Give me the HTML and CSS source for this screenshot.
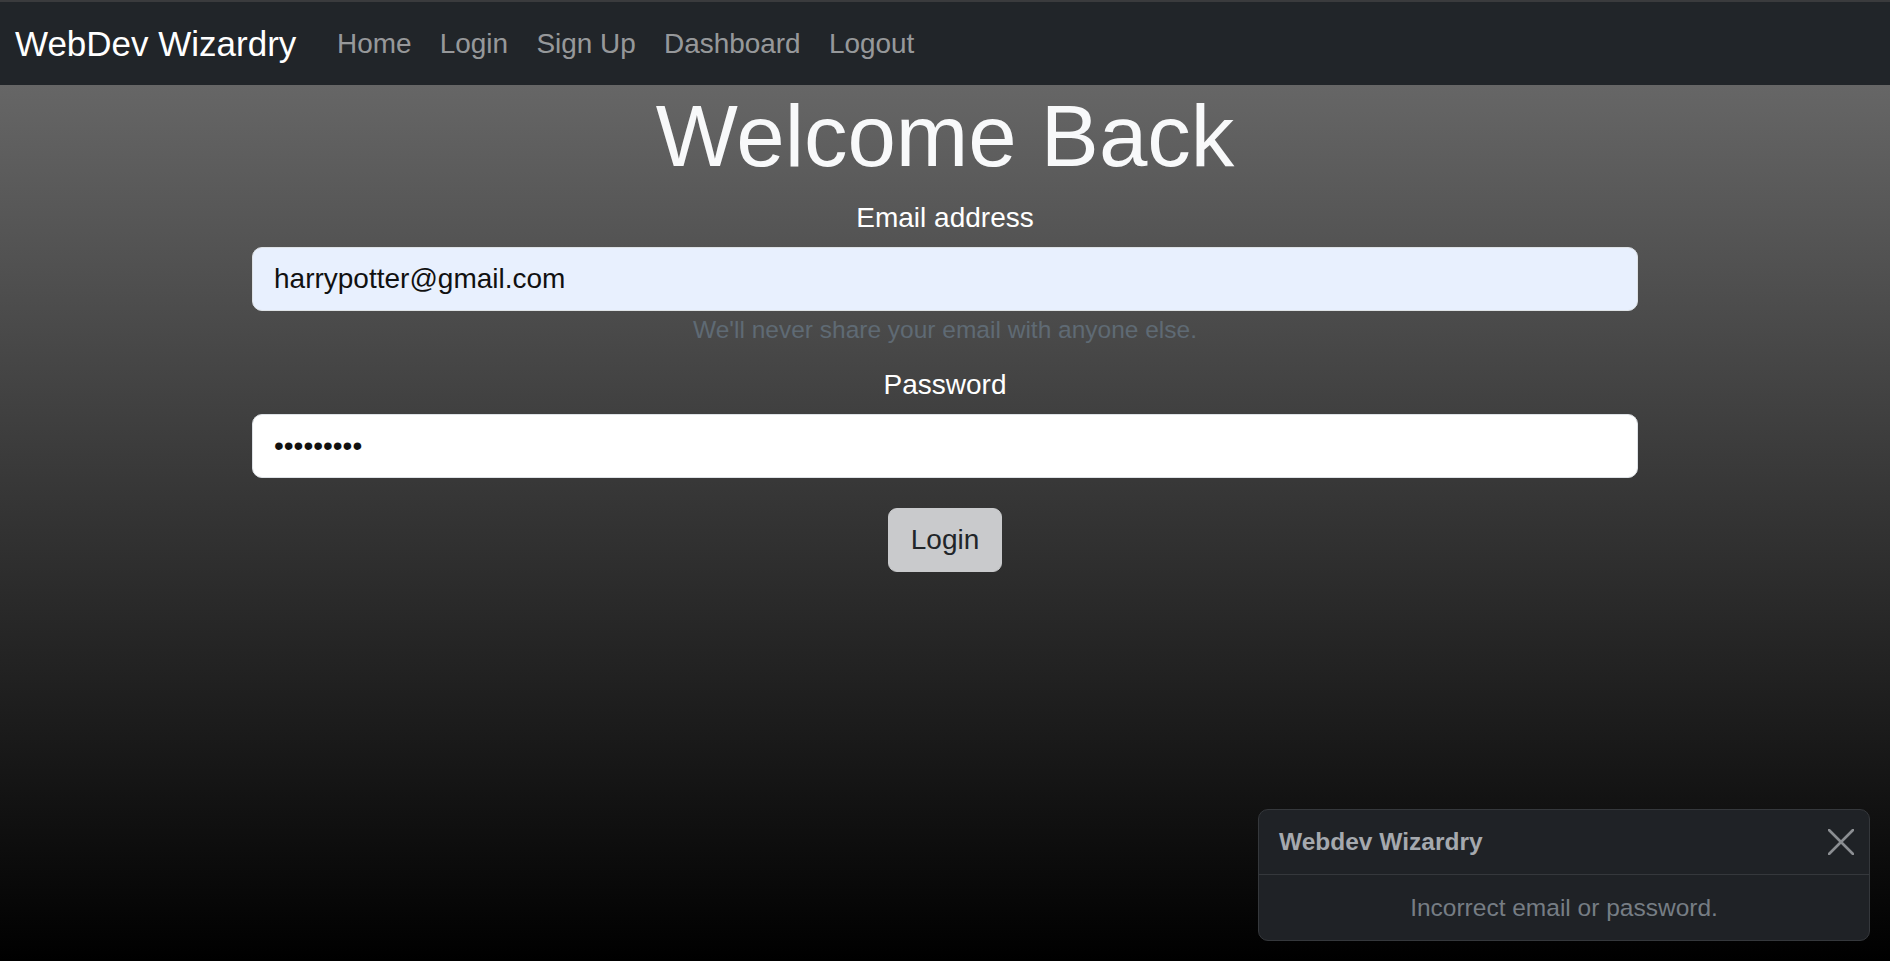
FILE: index.html
```html
<!DOCTYPE html>
<html lang="en">
<head>
<meta charset="utf-8">
<title>WebDev Wizardry - Login</title>
<link rel="stylesheet" href="styles.css">
</head>
<body>
<nav class="navbar">
  <a class="brand" href="#">WebDev Wizardry</a>
  <ul class="nav-links">
    <li><a href="#">Home</a></li>
    <li><a href="#">Login</a></li>
    <li><a href="#">Sign Up</a></li>
    <li><a href="#">Dashboard</a></li>
    <li><a href="#">Logout</a></li>
  </ul>
</nav>
<main class="page">
  <div class="container">
    <h1 class="title">Welcome Back</h1>
    <form class="login-form">
      <div class="field">
        <label class="label" for="email">Email address</label>
        <input class="input input-autofill" id="email" type="email" value="harrypotter@gmail.com">
        <div class="help">We'll never share your email with anyone else.</div>
      </div>
      <div class="field">
        <label class="label" for="password">Password</label>
        <input class="input" id="password" type="password" value="123456789">
      </div>
      <button class="btn" type="button">Login</button>
    </form>
  </div>
</main>
<div class="toast">
  <div class="toast-header">
    <strong class="toast-title">Webdev Wizardry</strong>
    <button class="toast-close" type="button" aria-label="Close">
      <svg width="26" height="26" viewBox="0 0 26 26"><path d="M1 1 L25 25 M25 1 L1 25" stroke="#8b8e92" stroke-width="2.6" stroke-linecap="round" fill="none"/></svg>
    </button>
  </div>
  <div class="toast-body">Incorrect email or password.</div>
</div>
</body>
</html>
```
FILE: styles.css
```css
* { box-sizing: border-box; }
html, body { margin: 0; padding: 0; }
body {
  font-family: "Liberation Sans", Arial, Helvetica, sans-serif;
  background: #000;
  color: #fff;
  height: 961px;
  overflow: hidden;
}
.navbar {
  height: 85px;
  background: #212529;
  border-top: 2px solid #3a3b3d;
  display: flex;
  align-items: center;
  padding-left: 15px;
}
.brand {
  color: #fff;
  text-decoration: none;
  font-size: 35px;
  margin-right: 26.5px;
  line-height: 1;
}
.nav-links {
  list-style: none;
  display: flex;
  margin: 0;
  padding: 0;
}
.nav-links a {
  display: block;
  padding: 0 14.2px;
  font-size: 27.9px;
  color: rgba(255, 255, 255, 0.55);
  text-decoration: none;
}
.page {
  height: 876px;
  background: linear-gradient(#666666, #000000);
}
.container {
  width: 1386px;
  margin: 0 auto;
  text-align: center;
}
.title {
  margin: 0 0 13px;
  padding-top: 3px;
  font-size: 87px;
  line-height: 1.1;
  font-weight: 400;
  color: #f8f9fa;
}
.login-form {
  display: flex;
  flex-direction: column;
  align-items: center;
}
.field {
  width: 100%;
  display: flex;
  flex-direction: column;
  align-items: center;
}
.label {
  display: block;
  font-size: 28px;
  line-height: 42px;
  color: #fff;
  margin-bottom: 8px;
}
.input {
  width: 100%;
  height: 64px;
  border: 1px solid #dee2e6;
  border-radius: 10px;
  background: #fff;
  font-family: "Liberation Sans", Arial, sans-serif;
  font-size: 28px;
  color: #111;
  padding: 0 21px;
  outline: none;
}
.input-autofill { background: #e8f0fe; }
.help {
  font-size: 24.5px;
  line-height: 36.75px;
  color: #5f6a74;
  margin-top: 1px;
  margin-bottom: 16px;
}
.btn {
  margin-top: 30px;
  height: 64px;
  padding: 0 22px;
  border: 1px solid #c9cacc;
  border-radius: 9px;
  background: #c9cacc;
  color: #212529;
  font-family: "Liberation Sans", Arial, sans-serif;
  font-size: 28px;
}
.toast {
  position: fixed;
  right: 20px;
  bottom: 20px;
  width: 612px;
  background: #1f2226;
  border: 1px solid #35383c;
  border-radius: 10px;
}
.toast-header {
  height: 65px;
  display: flex;
  align-items: center;
  justify-content: space-between;
  padding: 0 15px 0 20px;
  border-bottom: 1px solid #35383c;
}
.toast-title {
  font-size: 24.5px;
  font-weight: 700;
  color: #a5a9ae;
}
.toast-close {
  background: none;
  border: 0;
  padding: 0;
  width: 26px;
  height: 26px;
  display: flex;
}
.toast-body {
  height: 65px;
  display: flex;
  align-items: center;
  justify-content: center;
  font-size: 24.5px;
  color: #767d84;
}
```
